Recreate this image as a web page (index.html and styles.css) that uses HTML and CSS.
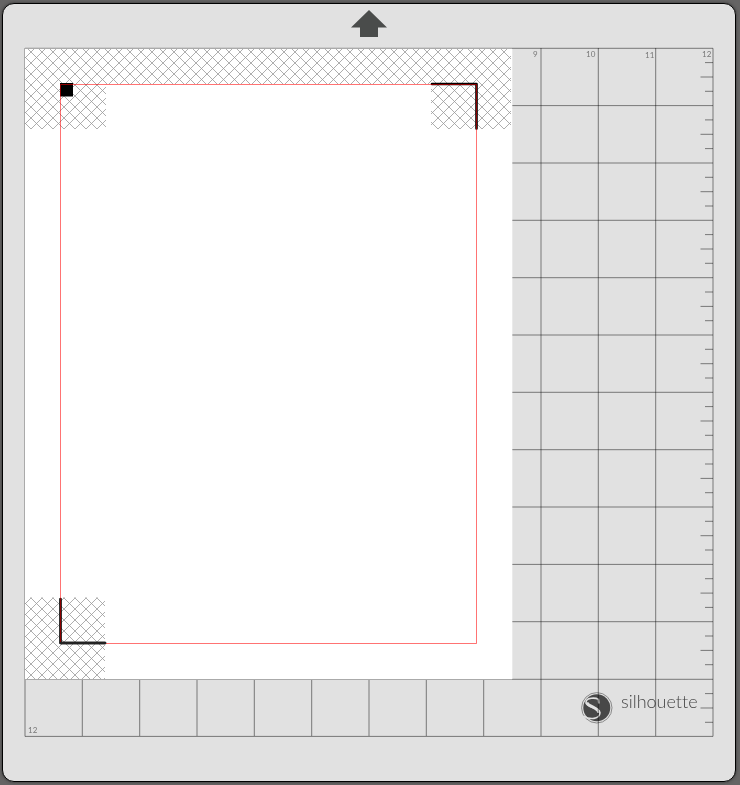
FILE: index.html
```html
<!DOCTYPE html>
<html lang="en">
<head>
<meta charset="utf-8">
<title>Cutting mat</title>
<link rel="stylesheet" href="styles.css">
</head>
<body>
<main class="mat">
  <header class="feed">
    <svg class="feed-arrow" viewBox="0 0 36 27" aria-label="Feed direction"><path d="M18 0 36 17.500H27V27H9V17.500H0Z"/></svg>
  </header>
  <svg class="board" viewBox="24 47 690 691" aria-label="12 inch mat">
    <defs>
      <pattern id="hatch" x="31" y="52" width="11" height="11" patternUnits="userSpaceOnUse"><path class="hatch-line" d="M-1-1 12 12M12-1-1 12"/></pattern>
      <pattern id="hatch-low" x="31" y="609" width="11" height="11" patternUnits="userSpaceOnUse"><path class="hatch-line" d="M-1-1 12 12M12-1-1 12"/></pattern>
      <g id="ticks"><path d="M705 14.300h8M700.500 28.700h12.500M705 43h8"/></g>
    </defs>

    <g class="logo">
      <circle class="logo-ring" cx="596.800" cy="707.800" r="15.200"/>
      <circle class="logo-disc" cx="596.800" cy="707.800" r="13.500"/>
      <path class="logo-s" d="M598.800 703.500 598.400 699.400C595.500 697.500 586.300 697.300 586 702.200C585.800 708.300 600.200 706.500 599.900 713C599.600 719.200 590 720 583.800 716.200"/>
      <path class="logo-s-core" d="M586.800 702.500C588.600 707.300 598.500 707 598.900 713"/>
      <text class="logo-name" x="621" y="708">silhouette</text>
    </g>

    <g class="grid">
      <path d="M25 48.300H713V736.400H25Z"/>
      <path d="M82.300 48v688M139.700 48v688M197 48v688M254.300 48v688M311.700 48v688M369 48v688M426.300 48v688M483.700 48v688M541 48v688M598.300 48v688M655.700 48v688"/>
      <path d="M25 105.600h688M25 163h688M25 220.300h688M25 277.700h688M25 335h688M25 392.300h688M25 449.700h688M25 507h688M25 564.400h688M25 621.700h688M25 679.300h688"/>
      <use href="#ticks" y="48.300"/><use href="#ticks" y="105.600"/><use href="#ticks" y="163"/><use href="#ticks" y="220.300"/>
      <use href="#ticks" y="277.700"/><use href="#ticks" y="335"/><use href="#ticks" y="392.300"/><use href="#ticks" y="449.700"/>
      <use href="#ticks" y="507"/><use href="#ticks" y="564.400"/><use href="#ticks" y="621.700"/><use href="#ticks" y="679.300"/>
    </g>
    <g class="labels">
      <text x="533" y="57">9</text><text x="586" y="57">10</text><text x="645" y="58">11</text><text x="702" y="57">12</text>
      <text x="28" y="733">12</text>
    </g>

    <path class="page" d="M25 49H512.300V679H25Z"/>
    <path fill="url(#hatch)" d="M25 49H511V129H431V84H106V129H25Z"/>
    <path fill="url(#hatch-low)" d="M25 597.500h80v81.500h-80Z"/>
    <path class="page-edge" d="M24.500 679V48.500H512M25 679.500H512"/>

    <path class="mark-fill" d="M60 83h13v13.500H60Z"/>
    <path class="mark" d="M432 84H476.500V128.500M60.500 599V643H105"/>
    <path class="cut" d="M60.500 84.500H476.500V643.500H60.500Z"/>
    <path class="mark-end" d="M61 643H105"/>
  </svg>
</main>
</body>
</html>
```
FILE: styles.css
```css
* { box-sizing: border-box; }
body {
  margin: 0;
  min-height: 100vh;
  display: flex;
  padding: 3px 4px 3px 2px;
  background: #656464;
}
.mat {
  flex: 1;
  padding: 0 21px 42px;
  background: #e1e1e1;
  border: 1px solid #000;
  border-radius: 12px;
  box-shadow: 0 0 3px #333;
}
.feed {
  display: flex;
  justify-content: center;
  height: 43px;
  padding-top: 6px;
}
.feed-arrow { width: 36px; height: 27px; fill: #4a4c4b; }
.board { display: block; width: 100%; height: auto; will-change: transform; }
.hatch-line { fill: none; stroke: #999; stroke-width: 0.8; }
.grid { fill: none; stroke: #000; stroke-opacity: 0.47; stroke-width: 1; }
.labels { font: 8px Lato, sans-serif; fill: #777; }
.page { fill: #fff; }
.page-edge { fill: none; stroke: #aaa; }
.mark-fill { fill: #000; }
.mark { fill: none; stroke: #000; stroke-width: 2.6; stroke-linecap: round; stroke-linejoin: round; }
.mark-end { fill: none; stroke: #222; stroke-width: 2.6; stroke-linecap: round; }
.cut { fill: none; stroke: #f00; stroke-opacity: 0.55; }
.logo-ring { fill: #e1e1e1; stroke: #888; stroke-width: 1; }
.logo-disc { fill: #484848; }
.logo-s { fill: none; stroke: #e1e1e1; stroke-width: 1.6; }
.logo-s-core { fill: none; stroke: #e1e1e1; stroke-width: 3; }
.logo-name { font: 18px Lato, sans-serif; font-weight: 300; font-variant-ligatures: none; fill: #444; }
```
